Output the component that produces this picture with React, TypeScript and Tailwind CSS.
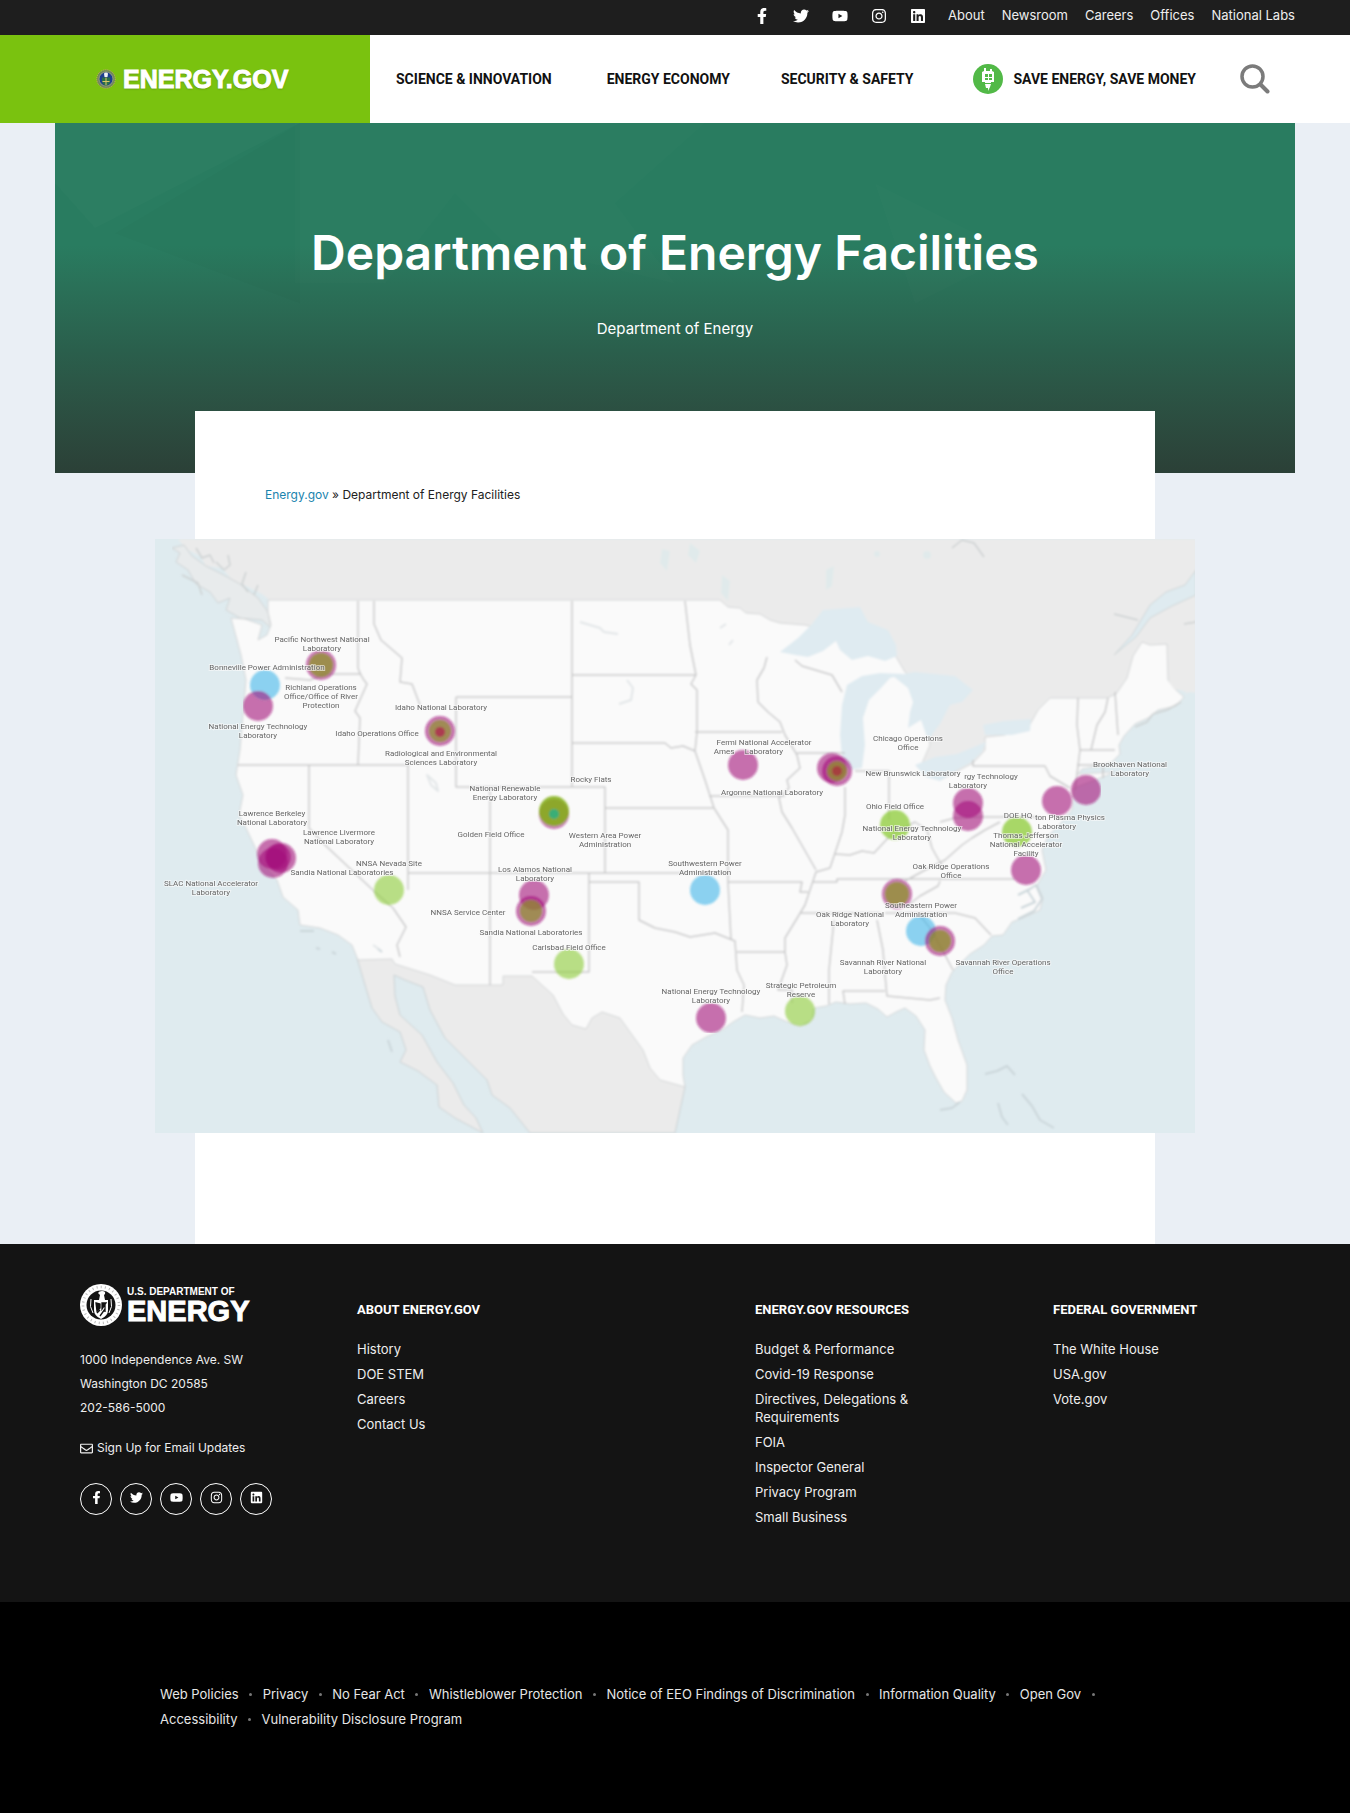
import React from "react";
import {
  FaFacebookF,
  FaTwitter,
  FaYoutube,
  FaInstagram,
  FaLinkedin,
  FaRegEnvelope,
} from "react-icons/fa";

const SOCIAL = [
  { name: "Facebook", Icon: FaFacebookF },
  { name: "Twitter", Icon: FaTwitter },
  { name: "YouTube", Icon: FaYoutube },
  { name: "Instagram", Icon: FaInstagram },
  { name: "LinkedIn", Icon: FaLinkedin },
];

const TOP_LINKS = ["About", "Newsroom", "Careers", "Offices", "National Labs"];

const COLUMNS = [
  { title: "ABOUT ENERGY.GOV", links: ["History", "DOE STEM", "Careers", "Contact Us"] },
  {
    title: "ENERGY.GOV RESOURCES",
    links: [
      "Budget & Performance",
      "Covid-19 Response",
      "Directives, Delegations & Requirements",
      "FOIA",
      "Inspector General",
      "Privacy Program",
      "Small Business",
    ],
  },
  { title: "FEDERAL GOVERNMENT", links: ["The White House", "USA.gov", "Vote.gov"] },
];

const POLICY_LINKS = [
  "Web Policies",
  "Privacy",
  "No Fear Act",
  "Whistleblower Protection",
  "Notice of EEO Findings of Discrimination",
  "Information Quality",
  "Open Gov",
  "Accessibility",
  "Vulnerability Disclosure Program",
];

function ColorSeal() {
  return (
    <svg viewBox="0 0 40 40" className="h-5 w-5" aria-hidden="true">
      <circle cx="20" cy="20" r="18.5" fill="#6f8a5a" stroke="#c9a869" strokeWidth="2" strokeDasharray="2 2" />
      <circle cx="20" cy="20" r="14" fill="#1d3f8f" stroke="#a9a68a" strokeWidth="1.5" />
      <path d="M12 17h16v8q-1 6-8 9q-7-3-8-9z" fill="#2c6f49" />
      <path d="M20 17v16M13 25h14" stroke="#d8c766" strokeWidth="2" />
      <path d="M16 9q4-4 8 0l-1 7h-6z" fill="#f0f2f5" />
    </svg>
  );
}

function WhiteSeal() {
  return (
    <svg viewBox="0 0 42 42" className="h-[42px] w-[42px] shrink-0" aria-hidden="true">
      <circle cx="21" cy="21" r="21" fill="#fff" />
      <circle cx="21" cy="21" r="18" fill="none" stroke="#141414" strokeWidth="2.5" strokeDasharray="1 3.2" opacity=".3" />
      <circle cx="21" cy="21" r="14.5" fill="#141414" />
      <path d="M18 9q1-2 4-2 4 0 3 3l-1 1 1 5h-6l1-5z" fill="#fff" />
      <path d="M14 16h14v10q0 6-7 9-7-3-7-9z" fill="#fff" />
      <path d="M16 19l4 1v4l-3 3zM22 19h4l-4 6zM20 32l5-7M17 29l3-3M25 21v7" stroke="#141414" strokeWidth="1.3" fill="#141414" />
      <path d="M11 15q-2 8 2 14M31 15q2 8-2 14" stroke="#fff" strokeWidth="1" fill="none" />
    </svg>
  );
}

function BulbBadge() {
  return (
    <svg viewBox="0 0 30 30" className="h-[30px] w-[30px] shrink-0" aria-hidden="true">
      <circle cx="15" cy="15" r="15" fill="#52b947" />
      <path d="M11 4h2v3h4V5h2v2l2 1v10h-3v1h-6v-1H9V8l2-1z" fill="#fff" />
      <path d="M12 10h3v3h-3zM16 10h3v3h-3zM12 14h3v2h-3zM16 14h3v2h-3z" fill="#52b947" />
      <path d="M12 20h6l-1 3-2 4v-3h-2z" fill="#fff" />
    </svg>
  );
}

function SearchIcon() {
  return (
    <svg viewBox="0 0 30 30" className="h-[30px] w-[30px]" fill="none" stroke="#7b7b7b" strokeLinecap="round" aria-hidden="true">
      <circle cx="12.5" cy="12.5" r="10.5" strokeWidth="3.5" />
      <path d="M20.5 20.5l7 7" strokeWidth="4" />
    </svg>
  );
}

const STATE_LINES = [
  "M358 601V668Q361 677 367 684L355 711L360 718L358 765",
  "M374 601V624L381 640L402 658L400 682L412 684L420 705",
  "M285 678L310 680L325 674H360",
  "M238 765H408V890",
  "M309 765V828L325 845L375 892L393 908L406 927L397 945L400 957",
  "M456 697H572M456 697V787H605V873M572 601V787",
  "M408 873H728M490 787V985M589 873V972H532",
  "M572 675H696M572 743H665L671 748L683 746L695 751",
  "M685 601L690 645L696 675L691 684L697 690V732L695 751L705 780L714 808L728 830V882L731 940",
  "M695 732H782M605 808H713M709 796H785",
  "M767 657L764 668L757 680L758 702L768 712L780 722L785 735L797 755L800 768L787 780L789 788L779 798L782 812L792 828L800 842L808 856L816 870",
  "M797 753H845M795 660L802 666L832 675L842 692",
  "M845 787V815L842 832L836 850L830 868L816 872L805 905L796 920L785 938V952L787 965L778 990H792V1003",
  "M855 771L889 771V820M835 854L850 855L862 851L874 853L888 838L900 830L915 822L927 830L932 848",
  "M589 882H639V920L655 928L675 932L690 937L715 933L735 941L737 970L744 985L742 1012",
  "M728 882H802L800 892H808M737 952H785M812 882H837V879H1015",
  "M800 913H880M885 913H955L975 918L991 935M940 881L938 886L920 896L907 906",
  "M834 920L829 970V1004M877 920L883 950L885 975L887 996L930 1000L940 998M845 1004L843 991H885",
  "M918 913L930 928L945 955L953 970",
  "M905 881L927 869L945 860L962 845L972 838L985 830L1000 822M932 848L942 866",
  "M973 760V766H1045L1050 776L1070 788M940 822L955 818L975 817M975 817H1040",
  "M1078 698L1077 725L1080 750L1075 790M1108 698L1105 712L1097 725L1091 750M1115 692L1118 735M1080 750H1115M1077 765H1103V778",
];

type Dot = { x: number; y: number; c: string; r?: number; o?: number };
const PINK = "#a3127c";
const GREEN = "#8ccb36";
const BLUE = "#3fb5e9";
const OLIVE = "#8b9a22";

const DOTS: Dot[] = [
  { x: 321, y: 665, c: PINK },
  { x: 321, y: 665, c: OLIVE, r: 12, o: 0.7 },
  { x: 265, y: 685, c: BLUE },
  { x: 258, y: 706, c: PINK },
  { x: 440, y: 731, c: PINK },
  { x: 440, y: 731, c: OLIVE, r: 11, o: 0.65 },
  { x: 440, y: 732, c: "#b01850", r: 5, o: 0.7 },
  { x: 554, y: 814, c: PINK },
  { x: 554, y: 811, c: "#84b216", o: 0.85 },
  { x: 554, y: 814, c: "#27b08a", r: 5, o: 0.8 },
  { x: 743, y: 765, c: PINK },
  { x: 832, y: 768, c: PINK },
  { x: 837, y: 771, c: PINK },
  { x: 837, y: 771, c: OLIVE, r: 10, o: 0.7 },
  { x: 837, y: 771, c: "#b01840", r: 5, o: 0.6 },
  { x: 968, y: 803, c: PINK },
  { x: 968, y: 816, c: PINK },
  { x: 1057, y: 801, c: PINK },
  { x: 1086, y: 790, c: PINK },
  { x: 895, y: 825, c: GREEN, o: 0.75 },
  { x: 1017, y: 832, c: GREEN, o: 0.75 },
  { x: 1026, y: 870, c: PINK },
  { x: 272, y: 854, c: PINK },
  { x: 281, y: 858, c: PINK },
  { x: 273, y: 863, c: PINK },
  { x: 278, y: 857, c: PINK, r: 13 },
  { x: 389, y: 890, c: GREEN },
  { x: 534, y: 895, c: PINK },
  { x: 531, y: 911, c: PINK },
  { x: 531, y: 911, c: OLIVE, r: 11, o: 0.65 },
  { x: 569, y: 964, c: GREEN },
  { x: 705, y: 890, c: BLUE },
  { x: 711, y: 1018, c: PINK },
  { x: 800, y: 1011, c: GREEN },
  { x: 897, y: 894, c: PINK },
  { x: 897, y: 894, c: OLIVE, r: 12, o: 0.7 },
  { x: 921, y: 931, c: BLUE },
  { x: 940, y: 941, c: PINK },
  { x: 940, y: 941, c: OLIVE, r: 11, o: 0.7 },
];

const LABELS: { x: number; y: number; lines: string[] }[] = [
  { x: 322, y: 642, lines: ["Pacific Northwest National", "Laboratory"] },
  { x: 267, y: 670, lines: ["Bonneville Power Administration"] },
  { x: 321, y: 690, lines: ["Richland Operations", "Office/Office of River", "Protection"] },
  { x: 258, y: 729, lines: ["National Energy Technology", "Laboratory"] },
  { x: 441, y: 710, lines: ["Idaho National Laboratory"] },
  { x: 377, y: 736, lines: ["Idaho Operations Office"] },
  { x: 441, y: 756, lines: ["Radiological and Environmental", "Sciences Laboratory"] },
  { x: 505, y: 791, lines: ["National Renewable", "Energy Laboratory"] },
  { x: 591, y: 782, lines: ["Rocky Flats"] },
  { x: 272, y: 816, lines: ["Lawrence Berkeley", "National Laboratory"] },
  { x: 339, y: 835, lines: ["Lawrence Livermore", "National Laboratory"] },
  { x: 389, y: 866, lines: ["NNSA Nevada Site"] },
  { x: 342, y: 875, lines: ["Sandia National Laboratories"] },
  { x: 211, y: 886, lines: ["SLAC National Accelerator", "Laboratory"] },
  { x: 491, y: 837, lines: ["Golden Field Office"] },
  { x: 605, y: 838, lines: ["Western Area Power", "Administration"] },
  { x: 535, y: 872, lines: ["Los Alamos National", "Laboratory"] },
  { x: 468, y: 915, lines: ["NNSA Service Center"] },
  { x: 531, y: 935, lines: ["Sandia National Laboratories"] },
  { x: 569, y: 950, lines: ["Carlsbad Field Office"] },
  { x: 705, y: 866, lines: ["Southwestern Power", "Administration"] },
  { x: 711, y: 994, lines: ["National Energy Technology", "Laboratory"] },
  { x: 801, y: 988, lines: ["Strategic Petroleum", "Reserve"] },
  { x: 724, y: 754, lines: ["Ames"] },
  { x: 764, y: 745, lines: ["Fermi National Accelerator", "Laboratory"] },
  { x: 772, y: 795, lines: ["Argonne National Laboratory"] },
  { x: 908, y: 741, lines: ["Chicago Operations", "Office"] },
  { x: 913, y: 776, lines: ["New Brunswick Laboratory"] },
  { x: 991, y: 779, lines: ["rgy Technology"] },
  { x: 968, y: 788, lines: ["Laboratory"] },
  { x: 895, y: 809, lines: ["Ohio Field Office"] },
  { x: 912, y: 831, lines: ["National Energy Technology", "Laboratory"] },
  { x: 1018, y: 818, lines: ["DOE HQ"] },
  { x: 1070, y: 820, lines: ["ton Plasma Physics"] },
  { x: 1057, y: 829, lines: ["Laboratory"] },
  { x: 1130, y: 767, lines: ["Brookhaven National", "Laboratory"] },
  { x: 1026, y: 838, lines: ["Thomas Jefferson", "National Accelerator", "Facility"] },
  { x: 951, y: 869, lines: ["Oak Ridge Operations", "Office"] },
  { x: 921, y: 908, lines: ["Southeastern Power", "Administration"] },
  { x: 850, y: 917, lines: ["Oak Ridge National", "Laboratory"] },
  { x: 883, y: 965, lines: ["Savannah River National", "Laboratory"] },
  { x: 1003, y: 965, lines: ["Savannah River Operations", "Office"] },
];

function FacilityMap() {
  return (
    <svg viewBox="155 539 1040 594" className="block h-auto w-full" role="img" aria-label="Map of Department of Energy facilities">
      <defs>
        <filter id="soft" x="0" y="0" width="1" height="1">
          <feGaussianBlur stdDeviation="0.8" />
        </filter>
        <filter id="softLabel" x="-5%" y="-5%" width="110%" height="110%">
          <feGaussianBlur stdDeviation="0.7" />
        </filter>
      </defs>
      <rect x="155" y="539" width="1040" height="594" fill="#dfebef" />
      <g filter="url(#soft)" strokeLinejoin="round">
        {/* Canada */}
        <path
          d="M178 539L186 549L200 556L206 566L222 568L232 580L246 586L262 594L272 602H720L880 700L915 775L975 770L1120 705L1172 685L1187 693L1196 690V539Z"
          fill="#ebebeb"
        />
        <path
          d="M172 548L180 553L176 562L188 570L196 584L210 592L218 603L230 598L226 610L240 618L262 620L271 628L268 612L258 598L240 584L222 574L206 566L192 556L184 545Z"
          fill="#e8ebec"
          stroke="#cfd3d4"
          strokeWidth="1"
        />
        <path d="M196 548l6 10 8-3 4 8M228 555l2 10-6 5M246 572l-4 12 6 8M258 585l-4 10M216 562l8 8M182 575l16 8 4 12" fill="none" stroke="#cdd1d2" strokeWidth="1.5" />
        {/* Mexico and Baja California */}
        <path
          d="M357 958L365 985L372 1008L382 1022L400 1032L406 1050L400 1062L418 1071L437 1085L439 1107L455 1118L483 1133L476 1118L464 1105L453 1083L437 1062L422 1035L400 1015L395 996L394 975L405 980L423 987L430 1010L445 1038L465 1058L487 1080L492 1095L510 1108L530 1133H675L685 1087L640 1000L540 960Z"
          fill="#ebebeb"
          stroke="#cbd1d3"
          strokeWidth="1"
        />
        {/* Contiguous United States */}
        <path
          d="M268 600H720L728 607L740 608L746 613L760 614L770 620L780 623L805 625L870 640L895 655L905 672L925 690L930 745L920 768L940 780L973 763L985 750L985 737L1005 735L1028 728L1038 710L1050 698H1107L1116 694L1127 678L1133 656L1142 642L1150 645L1167 644L1168 680L1176 690L1184 697L1176 706L1158 710L1148 718L1135 724L1124 736L1119 745L1120 754L1112 762L1100 766L1082 769L1078 774L1115 772L1090 782L1074 788L1072 810L1060 824L1048 836L1042 850L1046 870L1037 885L1043 898L1040 910L1025 917L1012 922L1003 935L992 936L984 945L970 954L962 962L952 972L946 985L945 1000L952 1018L958 1040L967 1065L967 1090L962 1101L956 1103L944 1092L936 1078L930 1066L924 1050L925 1030L916 1016L905 1008L896 1012L887 1017L878 1009L866 1003L850 1004L836 1002L826 1006L814 1008L812 1020L800 1026L785 1021L774 1016L760 1018L745 1015L733 1022L722 1030L706 1037L692 1045L683 1058L683 1075L685 1087L660 1080L650 1068L643 1050L630 1032L620 1018L602 1012L592 1018L586 1029L572 1025L563 1014L553 995L532 976H503V985H455L430 975L395 964L392 959L358 960L352 945L338 935L320 928L300 925L298 910L283 897L277 880L262 862L247 830L239 815L243 795L236 775L240 750L243 715L246 680L241 655L237 640L231 618L245 619L262 625L258 640L267 635L271 625L268 612Z"
          fill="#fafafa"
          stroke="#d4d6d7"
          strokeWidth="1"
        />
        {/* Great Lakes */}
        <g fill="#dfebf1">
          <path d="M780 652L798 638L812 624L823 610L860 607L868 622L888 630L896 645L897 656L885 661L868 656L852 660L840 650L836 641L823 651L808 657L795 655Z" />
          <path d="M847 685L842 705L840 735L842 758L850 770L862 768L865 745L863 718L869 700L881 688L890 678L905 674L880 673L862 676Z" />
          <path d="M893 676L915 672L955 676L973 690L962 702L950 705L940 724L928 740L921 720L908 728L910 712L913 702L908 688Z" />
          <path d="M915 765L935 757L957 754L986 742L982 752L970 763L955 771L940 781L926 777Z" />
          <path d="M983 725L1004 721L1031 719L1030 731L1012 735L985 735Z" />
        </g>
        {/* St. Lawrence and Maine coast */}
        <path d="M1114 655L1132 635L1150 605L1166 592L1185 585L1196 570V595L1172 606L1150 618L1136 637Z" fill="#dfebf0" stroke="#d1d6d7" strokeWidth="1" />
        <path d="M1114 614l24 6M1184 624l12-2M952 548l10-8 12 3 10 14M1135 727l12-5 6-8 14-4 14-8" fill="none" stroke="#cdd1d2" strokeWidth="1.5" />
        <path d="M1168 681l6 8 22 4v-10z" fill="#ebebeb" />
        <g fill="#e0eaeb">
          <path d="M662 549l8 2-3 20-7-8zM690 543l10 8-4 12-8-8zM722 575l8 6-2 20-7-8zM826 570l8-4-2 20-6 4z" />
          <circle cx="877" cy="554" r="3" />
          <circle cx="927" cy="555" r="4" />
        </g>
        {/* Bahamas, Keys, Chesapeake and Channel Islands */}
        <path
          d="M985 1074l12-3 10-5 8 9M998 1103l4 14 6 8M1022 1094l10 12 8 14 14 8M940 1110l12-2 8-6M1018 895l12-6 6-4 6 14-8 12-16 8M1027 890l8 12-14 6M300 931l14 0M316 948l4 1M332 952l4 2M388 1040l4 12M377 948l5 4"
          fill="none"
          stroke="#cbd6da"
          strokeWidth="2"
        />
        <path d="M427 775l4 10 7 6-2-8zM580 622l20 6 4 4 14 2M627 680l6 8-2 12-12 4M720 628l6-4M729 645l4-5M373 945l6 4" fill="none" stroke="#e2e6e8" strokeWidth="2" />
        <path d={STATE_LINES.join("")} fill="none" stroke="#c9c9ca" strokeWidth="1.5" />
      </g>
      <g filter="url(#soft)">
        {DOTS.map((d, i) => (
          <circle key={i} cx={d.x} cy={d.y} r={d.r ?? 15} fill={d.c} opacity={d.o ?? 0.6} />
        ))}
      </g>
      <g
        filter="url(#softLabel)"
        fontFamily="Roboto, 'Noto Sans', sans-serif"
        fontSize="8"
        fill="#666666"
        stroke="#fafafa"
        strokeOpacity="0.6"
        strokeWidth="2"
        paintOrder="stroke"
        textAnchor="middle"
      >
        {LABELS.map((l, i) => (
          <text key={i} x={l.x} y={l.y}>
            {l.lines.map((t, j) => (
              <tspan key={j} x={l.x} dy={j === 0 ? 0 : 9}>
                {t}
              </tspan>
            ))}
          </text>
        ))}
      </g>
    </svg>
  );
}

export default function App() {
  return (
    <div className="min-h-screen bg-[#eaeff5] font-['Inter','Liberation_Sans',sans-serif] text-[#212121]">
      <div className="flex h-[35px] items-center justify-end bg-[#1e1e1e] pr-[55px] pb-1 text-white">
        <ul className="flex items-center gap-[23px]">
          {SOCIAL.map(({ name, Icon }) => (
            <li key={name}>
              <a href="#" aria-label={name} className="flex w-4 justify-center">
                <Icon className="size-4 shrink-0" />
              </a>
            </li>
          ))}
        </ul>
        <ul className="ml-[22px] flex gap-[17px] text-[13px] text-[#eeeeee]">
          {TOP_LINKS.map((t) => (
            <li key={t}>
              <a href="#">{t}</a>
            </li>
          ))}
        </ul>
      </div>

      <header className="flex h-[88px] bg-white">
        <a href="#" className="flex w-[370px] shrink-0 items-center gap-[7px] bg-[#7ac20f] pl-[96px] text-white">
          <ColorSeal />
          <span className="pt-px font-['Liberation_Sans',Arial,sans-serif] text-[25px] font-bold [-webkit-text-stroke:1px_white] [text-shadow:0_1px_2px_#5a8a10]">
            ENERGY.GOV
          </span>
        </a>
        <nav className="flex grow items-center pl-[26px] text-sm font-bold text-[#111111] font-['Roboto',sans-serif]">
          <a href="#">SCIENCE &amp; INNOVATION</a>
          <a href="#" className="ml-[55px]">ENERGY ECONOMY</a>
          <a href="#" className="ml-[51px]">SECURITY &amp; SAFETY</a>
          <a href="#" className="ml-[60px] flex items-center gap-[10px]">
            <BulbBadge />
            SAVE ENERGY, SAVE MONEY
          </a>
          <button type="button" aria-label="Search" className="mr-20 ml-auto">
            <SearchIcon />
          </button>
        </nav>
      </header>

      <main>
        <section className="relative mx-[55px] h-[350px] overflow-hidden bg-linear-to-b from-[#297c60] from-35% via-[#2a5f4c] via-65% to-[#2b4037] pt-[100px] text-center text-white">
          <svg viewBox="0 0 1240 349" preserveAspectRatio="none" className="absolute inset-0 h-full w-full" aria-hidden="true">
            <path d="M0 0H245L40 105L0 60Z" fill="#fff" opacity=".015" />
            <path d="M240 0H650L560 80L620 160L450 120L400 70L330 160H240Z" fill="#fff" opacity=".012" />
            <path d="M245 0V180L60 110Z" fill="#000" opacity=".015" />
            <path d="M820 60L960 130L860 180Z" fill="#fff" opacity=".012" />
          </svg>
          <h1 className="relative text-5xl leading-[60px] font-semibold">Department of Energy Facilities</h1>
          <p className="relative mt-[34px] text-[15px] leading-6">Department of Energy</p>
        </section>

        <section className="relative mx-auto -mt-[62px] max-w-[960px] bg-white pt-[74px] pb-[111px]">
          <p className="px-[70px] text-xs leading-5">
            <a href="#" className="text-[#1a84ae]">Energy.gov</a> » Department of Energy Facilities
          </p>
          <div className="-mx-10 mt-[34px]">
            <FacilityMap />
          </div>
        </section>
      </main>

      <footer>
        <div className="grid min-h-[358px] grid-cols-[277fr_398fr_298fr_217fr] bg-[#141414] px-20 pt-10 pb-[75px] text-[#eeeeee]">
          <div>
            <a href="#" className="flex items-center gap-[5px] font-['Liberation_Sans',Arial,sans-serif] font-bold text-white">
              <WhiteSeal />
              <span className="flex flex-col">
                <span className="text-[10px] leading-3">U.S. DEPARTMENT OF</span>
                <span className="text-[29px] leading-[26px] [-webkit-text-stroke:1px_white]">ENERGY</span>
              </span>
            </a>
            <address className="mt-[22px] text-xs leading-6 not-italic">
              1000 Independence Ave. SW
              <br />
              Washington DC 20585
              <br />
              202-586-5000
            </address>
            <a href="#" className="mt-4 flex items-center gap-1 text-xs leading-6">
              <FaRegEnvelope className="size-[13px]" />
              Sign Up for Email Updates
            </a>
            <ul className="mt-[23px] flex gap-2 text-white">
              {SOCIAL.map(({ name, Icon }) => (
                <li key={name}>
                  <a href="#" aria-label={name} className="flex size-8 items-center justify-center rounded-full border border-white pb-1">
                    <Icon className="size-[13px]" />
                  </a>
                </li>
              ))}
            </ul>
          </div>
          {COLUMNS.map((c) => (
            <div key={c.title} className="pt-4">
              <h2 className="font-['Roboto',sans-serif] text-[13px] leading-5 font-bold text-white">{c.title}</h2>
              <ul className="mt-5 flex max-w-[165px] flex-col gap-[7px] text-[13px] leading-[18px]">
                {c.links.map((l) => (
                  <li key={l}>
                    <a href="#">{l}</a>
                  </li>
                ))}
              </ul>
            </div>
          ))}
        </div>
        <div className="bg-black px-40 pt-20 pb-[81px]">
          <ul className="flex max-w-[1000px] flex-wrap text-[13px] leading-[25px] text-[#e6e6e6]">
            {POLICY_LINKS.map((l, i) => (
              <li key={l} className="flex">
                <a href="#">{l}</a>
                {i < POLICY_LINKS.length - 1 && (
                  <span className="flex w-6 items-center justify-center" aria-hidden="true">
                    <span className="size-[3px] rounded-full bg-[#777777]" />
                  </span>
                )}
              </li>
            ))}
          </ul>
        </div>
      </footer>
    </div>
  );
}
